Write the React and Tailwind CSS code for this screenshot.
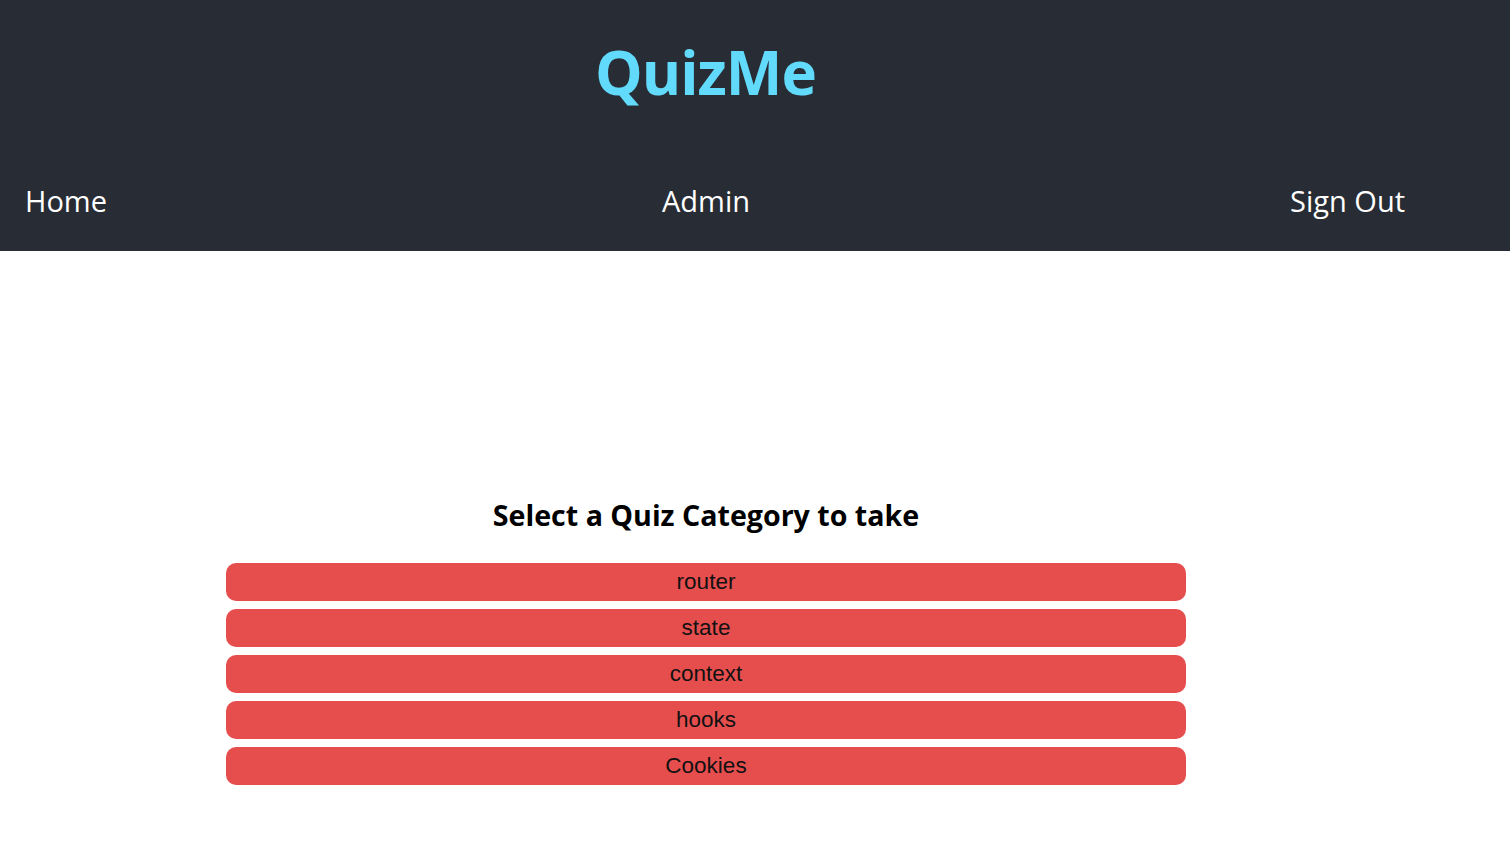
import React from 'react';

const categories = ['router', 'state', 'context', 'hooks', 'Cookies'];

function App() {
  return (
    <div className="min-h-screen bg-white" style={{ fontFamily: '"Open Sans", "Noto Sans", sans-serif' }}>
      {/* header */}
      <header className="bg-[#282c34] h-[251px] flex flex-col">
        <div className="w-[1411px] flex justify-center pt-[32px]">
          <h1 className="text-[60px] leading-[80px] font-bold text-[#61dafb] tracking-[-1px]">QuizMe</h1>
        </div>
        <nav className="w-[1410px] grid grid-cols-3 items-center mt-[69px] text-white text-[29px] leading-[40px]">
          <a className="pl-[25px]">Home</a>
          <a className="text-center pl-[2px]">Admin</a>
          <a className="text-right pr-[5px]">Sign Out</a>
        </nav>
      </header>

      {/* content */}
      <main className="w-[1412px] flex flex-col items-center pt-[245px]">
        <h2 className="text-[28.6px] leading-[38px] font-bold text-black">Select a Quiz Category to take</h2>
        <div className="w-[960px] flex flex-col gap-[8px] mt-[29px]">
          {categories.map((c) => (
            <button
              key={c}
              className="h-[38px] w-full rounded-[10px] bg-[#e64e4e] text-[#111] text-[22.5px] leading-[38px]"
              style={{ fontFamily: '"Liberation Sans", Arial, sans-serif' }}
            >
              {c}
            </button>
          ))}
        </div>
      </main>
    </div>
  );
}

export default App;
